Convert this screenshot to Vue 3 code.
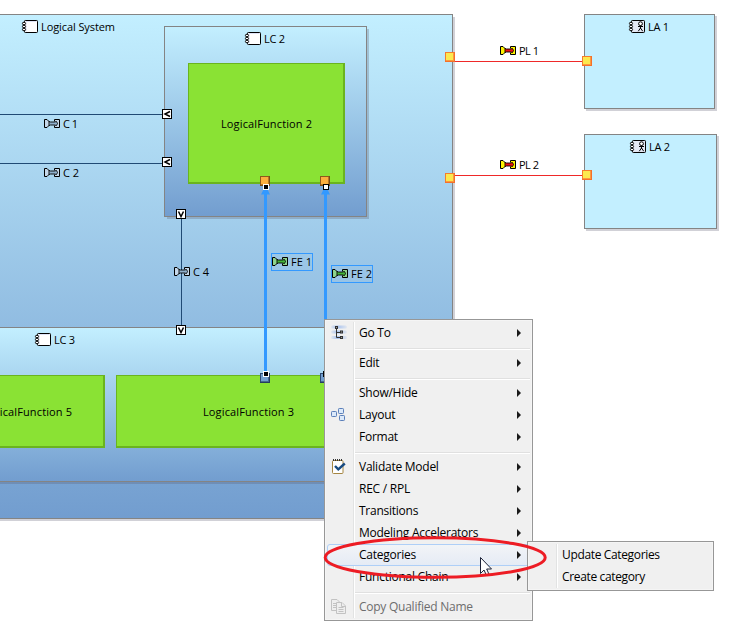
<script setup>
const labels = [
  { text: 'Logical System', x: 41, y: 31, w: 74 },
  { text: 'LC 2', x: 264, y: 43, w: 21 },
  { text: 'LC 3', x: 54, y: 344, w: 21 },
  { text: 'C 1', x: 63, y: 128, w: 15 },
  { text: 'C 2', x: 63, y: 177, w: 16 },
  { text: 'C 4', x: 193, y: 276, w: 16 },
  { text: 'FE 1', x: 291, y: 266, w: 21 },
  { text: 'FE 2', x: 351, y: 278, w: 21 },
  { text: 'PL 1', x: 519, y: 55, w: 20 },
  { text: 'PL 2', x: 519, y: 169, w: 20 },
  { text: 'LA 1', x: 648, y: 31, w: 21 },
  { text: 'LA 2', x: 649, y: 151, w: 21 },
  { text: 'LogicalFunction 2', x: 221, y: 128, w: 91 },
  { text: 'LogicalFunction 3', x: 203, y: 416, w: 91 },
  { text: 'LogicalFunction 5', x: -19, y: 416, w: 91 },
]

const functions = [
  { x: 188, y: 63, w: 157, h: 121 },
  { x: -60, y: 375, w: 165, h: 73 },
  { x: 116, y: 375, w: 260, h: 73 },
]

const actors = [
  { x: 584, y: 14, w: 131, h: 95, ix: 629, iy: 20 },
  { x: 584, y: 134, w: 133, h: 95, ix: 630, iy: 140 },
]

const components = [[22, 20], [245, 32], [35, 333]]

const connectors = [
  { x: 44, y: 119, end: '#c6d8ea', mid: '#8fb0cc' },
  { x: 44, y: 168, end: '#c6d8ea', mid: '#8fb0cc' },
  { x: 174, y: 267, end: '#c6d8ea', mid: '#8fb0cc' },
  { x: 272, y: 257, end: '#8fd48c', mid: '#45b53a' },
  { x: 332, y: 269, end: '#8fd48c', mid: '#45b53a' },
  { x: 500, y: 46, end: '#fff200', mid: '#ee1111' },
  { x: 500, y: 160, end: '#fff200', mid: '#ee1111' },
]

const flowPorts = [
  { x: 162, y: 109, d: 'M8 2.5 L3 5 L8 7.5' },
  { x: 162, y: 157, d: 'M8 2.5 L3 5 L8 7.5' },
  { x: 176, y: 209, d: 'M2.5 2.5 L5 7.5 L7.5 2.5' },
  { x: 176, y: 325, d: 'M2.5 2.5 L5 7.5 L7.5 2.5' },
]

const ports = [
  { x: 445, y: 52, kind: 'physical' },
  { x: 445, y: 173, kind: 'physical' },
  { x: 582, y: 56, kind: 'physical' },
  { x: 582, y: 170, kind: 'physical' },
  { x: 260, y: 176, kind: 'input' },
  { x: 320, y: 176, kind: 'input' },
  { x: 260, y: 373, kind: 'output' },
  { x: 320, y: 373, kind: 'output' },
]

const handles = [
  { x: 263, y: 184, solid: true },
  { x: 323, y: 184, solid: false },
  { x: 263, y: 371, solid: true },
  { x: 323, y: 371, solid: false },
]

const menu = [
  [{ label: 'Go To', icon: 'goto', sub: true }],
  [{ label: 'Edit', sub: true }],
  [
    { label: 'Show/Hide', sub: true },
    { label: 'Layout', icon: 'layout', sub: true },
    { label: 'Format', sub: true },
  ],
  [
    { label: 'Validate Model', icon: 'validate', sub: true },
    { label: 'REC / RPL', sub: true },
    { label: 'Transitions', sub: true },
    { label: 'Modeling Accelerators', sub: true },
    { label: 'Categories', sub: true, active: true },
    { label: 'Functional Chain', sub: true },
  ],
  [{ label: 'Copy Qualified Name', icon: 'copy', disabled: true }],
]

const submenu = ['Update Categories', 'Create category']
</script>

<template>
  <div class="window">
    <svg class="diagram" width="740" height="630" viewBox="0 0 740 630">
      <defs>
        <linearGradient id="component-fill" x1="0" y1="0" x2="0" y2="1">
          <stop offset="0" stop-color="#c3efff" />
          <stop offset="1" stop-color="#729dcf" />
        </linearGradient>
      </defs>

      <g class="crisp">
        <rect class="shadow" x="-10" y="17" width="465" height="504" />
        <rect class="component" x="-9.5" y="14.5" width="462" height="504" />
        <rect class="shadow" x="167" y="29" width="202" height="190" />
        <rect class="component" x="164.5" y="26.5" width="202" height="190" />
        <rect class="shadow" x="-10" y="482" width="400" height="2" />
        <rect class="component" x="-9.5" y="327.5" width="400" height="154" />

        <g v-for="a in actors" :key="a.y">
          <rect class="shadow" :x="a.x + 2" :y="a.y + 2" :width="a.w" :height="a.h" />
          <rect class="actor" :x="a.x + 0.5" :y="a.y + 0.5" :width="a.w - 1" :height="a.h - 1" />
        </g>

        <g v-for="f in functions" :key="f.x">
          <rect class="function-edge" :x="f.x" :y="f.y" :width="f.w" :height="f.h" />
          <rect class="function" :x="f.x + 1" :y="f.y + 1" :width="f.w - 3" :height="f.h - 3" />
        </g>

        <path class="exchange" d="M0 114.5H163M0 163.5H163M181.5 218V326" />
        <path class="link" d="M454 61.5H583M454 175.5H583" />
        <path class="selected" d="M265.5 190V372M325.5 190V372" />
      </g>

      <path class="arrow" d="M263.5 189.5H267.500L270 194.500H261zM323.500 189.500H327.500L330 194.500H321z" />

      <g class="crisp">
        <g v-for="p in ports" :key="p.x + '-' + p.y" :class="['port', p.kind]">
          <rect class="port-edge" :x="p.x" :y="p.y" width="10" height="10" />
          <rect class="port-shade" :x="p.x + 9" :y="p.y" width="1" height="10" />
          <rect class="port-shade" :x="p.x" :y="p.y + 9" width="10" height="1" />
          <rect class="port-face" :x="p.x + 1" :y="p.y + 1" width="8" height="8" />
          <path class="port-bevel" :d="`M${p.x + 8.5} ${p.y + 1}V${p.y + 8.5}H${p.x + 1}`" />
        </g>
        <g v-for="h in handles" :key="h.x + '-' + h.y">
          <rect :x="h.x" :y="h.y" width="6" height="6" :fill="h.solid ? '#fff' : '#000'" />
          <rect :x="h.x + 1" :y="h.y + 1" width="4" height="4" :fill="h.solid ? '#000' : '#fff'" />
        </g>
        <rect class="selection" x="271.5" y="253.5" width="41" height="17" />
        <rect class="selection" x="331.5" y="265.5" width="41" height="17" />
      </g>

      <g v-for="p in flowPorts" :key="p.x + '-' + p.y" :transform="`translate(${p.x} ${p.y})`">
        <rect x="0.5" y="0.5" width="9" height="9" fill="#fff" stroke="#000" />
        <path :d="p.d" fill="none" stroke="#000" stroke-width="1.5" />
      </g>

      <g v-for="c in components" :key="c[0]" :transform="`translate(${c[0]} ${c[1]})`">
        <rect x="2.5" y="0.5" width="13" height="12" rx="0.8" fill="#fff" stroke="#000" />
        <path d="M4 11.500V1.500H14.500" fill="none" stroke="#dfe4f7" />
        <g fill="#fff" stroke="#000">
          <ellipse cx="2" cy="3.500" rx="1.600" ry="1.300" />
          <ellipse cx="2" cy="6.500" rx="1.600" ry="1.300" />
          <ellipse cx="2" cy="9.500" rx="1.600" ry="1.300" />
        </g>
      </g>

      <g v-for="a in actors" :key="a.ix" :transform="`translate(${a.ix} ${a.iy})`">
        <rect x="2.500" y="0.500" width="13" height="12" rx="0.800" fill="#e4e8f4" stroke="#000" />
        <g fill="#fff" stroke="#000">
          <ellipse cx="2" cy="3.500" rx="1.600" ry="1.300" />
          <ellipse cx="2" cy="6.500" rx="1.600" ry="1.300" />
          <ellipse cx="2" cy="9.500" rx="1.600" ry="1.300" />
        </g>
        <circle cx="11.500" cy="3.700" r="1.900" fill="#fff" stroke="#000" />
        <path d="M11.500 5.500V8.500M9 6.500H14M11.500 8L9.300 11.200M11.500 8L13.700 11.200" fill="none" stroke="#000" />
      </g>

      <g v-for="c in connectors" :key="c.x + '-' + c.y" :transform="`translate(${c.x} ${c.y})`">
        <path d="M0.500 0.500H3L5.500 3V6L3 8.500H0.500z" :fill="c.end" stroke="#000" />
        <path d="M10.500 2.500V0.500H15.500V8.500H10.500V6.500" :fill="c.end" stroke="#000" />
        <path d="M5 2.500L6.500 3H10.500L12.500 2.500L13.500 4.500L12.500 6.500L10.500 6H6.500L5 6.500z" :fill="c.mid" stroke="#000" stroke-width="0.900" />
      </g>

      <text
        v-for="l in labels"
        :key="l.text"
        class="label"
        :x="l.x"
        :y="l.y"
        :textLength="l.w"
        lengthAdjust="spacing"
      >{{ l.text }}</text>
    </svg>

    <div class="menu main-menu">
      <div v-for="(group, g) in menu" :key="g" class="group">
        <div
          v-for="item in group"
          :key="item.label"
          :class="['item', { active: item.active, disabled: item.disabled }]"
        >
          <span class="icon">
            <svg v-if="item.icon === 'goto'" width="16" height="16" viewBox="0 0 16 16">
              <defs>
                <linearGradient id="goto-band">
                  <stop offset="0" stop-color="#a9c3ee" stop-opacity="0.2" />
                  <stop offset="0.4" stop-color="#a9c3ee" />
                  <stop offset="1" stop-color="#a9c3ee" stop-opacity="0.2" />
                </linearGradient>
              </defs>
              <g fill="url(#goto-band)">
                <rect x="0" y="0.500" width="16" height="3" rx="1.500" />
                <rect x="0" y="5.500" width="16" height="3" rx="1.500" />
                <rect x="0" y="11" width="16" height="3" rx="1.500" />
              </g>
              <path d="M5.500 3V12.500H10M5.500 7.500H10" fill="none" stroke="#333" />
              <path d="M4 1h3v3H4zM9 5.500h3v3H9zM9 11h3v3H9z" fill="#333" />
              <path d="M5 2h1v1H5zM10 6.500h1v1h-1zM10 12h1v1h-1z" fill="#999" />
            </svg>
            <svg v-else-if="item.icon === 'layout'" width="16" height="16" viewBox="0 0 16 16">
              <g fill="#dbe9fa" stroke="#5b7fb9">
                <rect x="0.500" y="4.500" width="5" height="5" rx="0.800" />
                <rect x="7.500" y="1.500" width="5" height="5" rx="0.800" />
                <rect x="8.500" y="8.500" width="5" height="5" rx="0.800" />
              </g>
            </svg>
            <svg v-else-if="item.icon === 'validate'" width="16" height="16" viewBox="0 0 16 16">
              <rect x="1.500" y="1.500" width="10.500" height="13" rx="1" fill="#fff" stroke="#a58642" />
              <path d="M2 1H12" stroke="#333" stroke-width="2" stroke-dasharray="1 1" />
              <path d="M4 7L7.300 10.300L13.800 4.500" fill="none" stroke="#174a80" stroke-width="2.400" />
            </svg>
            <svg v-else-if="item.icon === 'copy'" width="16" height="16" viewBox="0 0 16 16">
              <g fill="#eee" stroke="#c2c2c2">
                <path d="M0.500 0.500H6L8.500 3V11.500H0.500z" />
                <path d="M5.500 3.500H11L14.500 7V14.500H5.500z" />
                <path d="M2 4.500H5M2 6.500H5M2 8.500H5M7.500 8.500H12.500M7.500 10.500H12.500M7.500 12.500H12.500M10.500 3.500V7.500H14" />
              </g>
            </svg>
          </span>
          <span class="text">{{ item.label }}</span>
          <span v-if="item.sub" class="more"></span>
        </div>
      </div>
    </div>

    <div class="menu sub-menu">
      <div v-for="label in submenu" :key="label" class="item">
        <span class="icon"></span>
        <span class="text">{{ label }}</span>
      </div>
    </div>

    <svg class="overlay" width="740" height="630" viewBox="0 0 740 630">
      <path
        d="M480.500 557.500V573.500L484 570L486.500 575.500L489 574.300L486.700 569H491.500z"
        fill="#fff"
        stroke="#1d2238"
      />
      <ellipse class="ring" cx="435.200" cy="557.500" rx="110" ry="19.800" />
    </svg>
  </div>
</template>

<style>
body {
  margin: 0;
  background: #fff;
}
</style>

<style scoped>
.window {
  position: relative;
  width: 740px;
  height: 630px;
  overflow: hidden;
  background: #fff;
  font-family: "Open Sans", "Noto Sans", sans-serif;
}

.diagram {
  display: block;
}

.crisp {
  shape-rendering: crispEdges;
}

.shadow {
  fill: #5a5a6e;
  fill-opacity: 0.28;
}

.component {
  fill: url(#component-fill);
  stroke: #848484;
}

.actor {
  fill: #c3efff;
  stroke: #848484;
}

.function-edge {
  fill: #6ab41f;
}

.function {
  fill: #8ae234;
}

.exchange {
  stroke: #204a74;
}

.link {
  stroke: #ef2929;
}

.selected {
  stroke: #3399ff;
  stroke-width: 3;
}

.arrow {
  fill: #3399ff;
}

.selection {
  fill: none;
  stroke: #3399ff;
}

.port-bevel {
  fill: none;
}

.physical .port-edge {
  fill: #f57c2e;
}

.physical .port-shade {
  fill: #f5702a;
}

.physical .port-face {
  fill: #fce94f;
}

.physical .port-bevel {
  stroke: #fb9a3e;
}

.input .port-edge {
  fill: #8f5a1c;
}

.input .port-shade {
  fill: #7a4c16;
}

.input .port-face {
  fill: #fcaf3e;
}

.input .port-bevel {
  stroke: #b87824;
}

.output .port-edge {
  fill: #2d4a72;
}

.output .port-shade {
  fill: #263d60;
}

.output .port-face {
  fill: #729fcf;
}

.output .port-bevel {
  stroke: #45688f;
}

.label {
  font-size: 11px;
  fill: #000;
}

.menu {
  position: absolute;
  box-sizing: border-box;
  padding: 2px;
  border: 1px solid #979797;
  background: #f0f0f0;
  box-shadow: inset 0 0 0 1px #f5f5f5;
  font-size: 12px;
  letter-spacing: -0.25px;
}

.main-menu {
  left: 324px;
  top: 319px;
  width: 209px;
}

.sub-menu {
  left: 527px;
  top: 541px;
  width: 187px;
  letter-spacing: -0.35px;
}

.menu::before {
  content: "";
  position: absolute;
  left: 28px;
  top: 2px;
  bottom: 2px;
  width: 1px;
  background: #e2e3e3;
  border-right: 1px solid #fff;
}

.group + .group::before {
  content: "";
  display: block;
  height: 1px;
  margin: 4px 0 2px 28px;
  background: #e0e0e0;
  border-bottom: 1px solid #fff;
}

.item {
  position: relative;
  display: flex;
  align-items: center;
  box-sizing: border-box;
  height: 22px;
  padding: 0 9px 0 4px;
  border: 0 solid transparent;
  border-width: 1px 0;
  color: #000;
}

.item.active {
  border: 1px solid #aecff7;
  border-radius: 3px;
  padding: 0 8px 0 3px;
  background: linear-gradient(#f2f4f7, #e5ebf5);
}

.item.disabled {
  color: #6d6d6d;
}

.icon {
  display: flex;
  width: 16px;
  height: 16px;
  margin-right: 12px;
}

.text {
  flex: 1;
  line-height: 16px;
  white-space: nowrap;
}

.more {
  width: 0;
  height: 0;
  border-left: 4px solid #1a1a1a;
  border-top: 4px solid transparent;
  border-bottom: 4px solid transparent;
}

.overlay {
  position: absolute;
  left: 0;
  top: 0;
}

.ring {
  fill: none;
  stroke: #ed1c24;
  stroke-width: 3;
}
</style>
